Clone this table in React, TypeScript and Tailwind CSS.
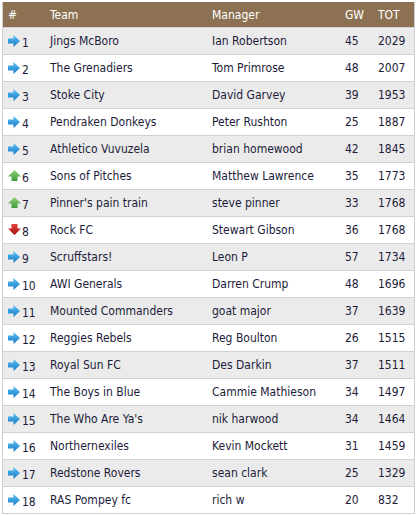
import React from 'react';

type Move = 'same' | 'up' | 'down';

const rows: [string, string, number, number, Move][] = [
  ['Jings McBoro', 'Ian Robertson', 45, 2029, 'same'],
  ['The Grenadiers', 'Tom Primrose', 48, 2007, 'same'],
  ['Stoke City', 'David Garvey', 39, 1953, 'same'],
  ['Pendraken Donkeys', 'Peter Rushton', 25, 1887, 'same'],
  ['Athletico Vuvuzela', 'brian homewood', 42, 1845, 'same'],
  ['Sons of Pitches', 'Matthew Lawrence', 35, 1773, 'up'],
  ["Pinner's pain train", 'steve pinner', 33, 1768, 'up'],
  ['Rock FC', 'Stewart Gibson', 36, 1768, 'down'],
  ['Scruffstars!', 'Leon P', 57, 1734, 'same'],
  ['AWI Generals', 'Darren Crump', 48, 1696, 'same'],
  ['Mounted Commanders', 'goat major', 37, 1639, 'same'],
  ['Reggies Rebels', 'Reg Boulton', 26, 1515, 'same'],
  ['Royal Sun FC', 'Des Darkin', 37, 1511, 'same'],
  ['The Boys in Blue', 'Cammie Mathieson', 34, 1497, 'same'],
  ["The Who Are Ya's", 'nik harwood', 34, 1464, 'same'],
  ['Northernexiles', 'Kevin Mockett', 31, 1459, 'same'],
  ['Redstone Rovers', 'sean clark', 25, 1329, 'same'],
  ['RAS Pompey fc', 'rich w', 20, 832, 'same'],
];

const MoveIcon = ({ move }: { move: Move }) => {
  if (move === 'up') {
    return (
      <svg width="13" height="12" viewBox="0 0 13 12" className="shrink-0">
        <defs>
          <linearGradient id="gUp" x1="0" y1="0" x2="0" y2="1">
            <stop offset="0" stopColor="#8fd27a" />
            <stop offset="1" stopColor="#3f9a3a" />
          </linearGradient>
        </defs>
        <path d="M6.5 0 L13 6.5 H9.5 V11 H3.5 V6.5 H0 Z" fill="url(#gUp)" />
      </svg>
    );
  }
  if (move === 'down') {
    return (
      <svg width="13" height="12" viewBox="0 0 13 12" className="shrink-0">
        <defs>
          <linearGradient id="gDown" x1="0" y1="0" x2="0" y2="1">
            <stop offset="0" stopColor="#e2433b" />
            <stop offset="1" stopColor="#a50f0f" />
          </linearGradient>
        </defs>
        <path d="M3.5 0 H9.5 V4.5 H13 L6.5 11 L0 4.5 H3.5 Z" fill="url(#gDown)" />
      </svg>
    );
  }
  return (
    <svg width="13" height="12" viewBox="0 0 13 12" className="shrink-0">
      <defs>
        <linearGradient id="gSame" x1="0" y1="0" x2="0" y2="1">
          <stop offset="0" stopColor="#5cc3f2" />
          <stop offset="1" stopColor="#1578c8" />
        </linearGradient>
      </defs>
      <path d="M0 3.5 H5.5 V0 L12 6 L5.5 12 V8.5 H0 Z" fill="url(#gSame)" />
    </svg>
  );
};

const App = () => {
  return (
    <div
      className="w-[417px] h-[516px] bg-white pt-[2px] pl-[2px] text-[12px] text-[#1c1c3a]"
      style={{ fontFamily: '"DejaVu Sans Condensed", "DejaVu Sans", sans-serif', fontStretch: 'condensed' }}
    >
      <div className="w-[413px] border border-[#cfcfcf] border-t-0">
        <div className="flex h-[25px] items-center bg-[#8c7153] text-white">
          <div className="w-[47px] pl-[5px]">#</div>
          <div className="w-[162px]">Team</div>
          <div className="w-[133px]">Manager</div>
          <div className="w-[33px]">GW</div>
          <div className="flex-1">TOT</div>
        </div>
        {rows.map(([team, manager, gw, tot, move], i) => (
          <div
            key={i}
            className={`flex h-[27px] items-center border-t border-[#d2d2d2] ${i % 2 === 0 ? 'bg-[#ebebeb]' : 'bg-white'}`}
          >
            <div className="w-[47px] pl-[5px] flex items-center">
              <MoveIcon move={move} />
              <span className="ml-[1px] mt-[4px]">{i + 1}</span>
            </div>
            <div className="w-[162px]">{team}</div>
            <div className="w-[133px]">{manager}</div>
            <div className="w-[33px]">{gw}</div>
            <div className="flex-1">{tot}</div>
          </div>
        ))}
      </div>
    </div>
  );
};

export default App;
